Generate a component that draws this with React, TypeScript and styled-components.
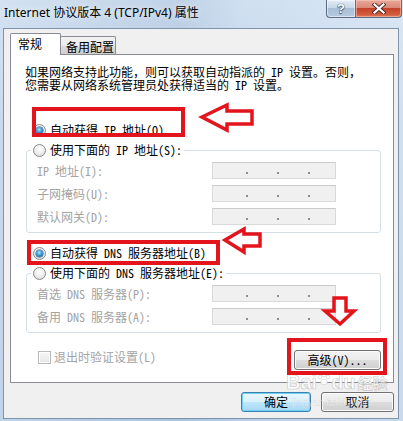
import React from 'react';
import styled, { createGlobalStyle, css } from 'styled-components';

const DLG_FONT = `"Noto Sans Mono CJK SC", "Noto Sans CJK SC", "Liberation Mono", monospace`;
const UI_FONT = `"Noto Sans", "Noto Sans CJK SC", sans-serif`;
const RED = '#e3141c';

const GlobalStyle = createGlobalStyle`
  html, body { margin: 0; padding: 0; width: 403px; height: 421px; overflow: hidden; }
  body { font-family: ${DLG_FONT}; font-size: 12px; background: #fff; }
  * { box-sizing: border-box; }
`;

const Window = styled.div`
  position: relative;
  width: 403px;
  height: 421px;
  display: flex;
  flex-direction: column;
  background:
    linear-gradient(90deg, rgba(255,255,255,0.18) 0%, rgba(120,140,170,0.12) 45%, rgba(255,255,255,0.1) 60%, rgba(255,255,255,0.3) 100%),
    linear-gradient(180deg, #cadcef 0%, #bcd1e9 30%, #b3cae4 100%);
`;

const TitleBar = styled.div`
  height: 28px;
  flex: none;
  display: flex;
  align-items: flex-start;
  padding-left: 4px;
`;

const TitleText = styled.div`
  margin-top: 5px;
  font-family: ${UI_FONT};
  font-size: 12px;
  line-height: 16px;
  color: #000;
  text-shadow: 0 0 6px rgba(255,255,255,0.9);
  flex: 1;
`;

const CaptionGroup = styled.div`
  display: flex;
  margin-right: 1px;
`;

const CaptionButton = styled.div<{ $kind: 'help' | 'close' }>`
  height: 18px;
  display: flex;
  align-items: center;
  justify-content: center;
  border: 1px solid #5c6c82;
  border-top: none;
  ${p => p.$kind === 'help' ? css`
    width: 29px;
    border-right: none;
    border-radius: 0 0 0 4px;
    background: linear-gradient(180deg, #e3ecf6 0%, #c9d8ea 45%, #a9bdd6 50%, #b7cae0 100%);
    box-shadow: inset 0 0 0 1px rgba(255,255,255,0.5);
  ` : css`
    width: 47px;
    border-radius: 0 0 4px 0;
    background: linear-gradient(180deg, #e9a99a 0%, #d98a77 45%, #c4432b 50%, #d35c3e 85%, #e07c5a 100%);
    box-shadow: inset 0 0 0 1px rgba(255,220,210,0.45);
  `}
`;

const HelpGlyph = styled.span`
  font-family: "Liberation Sans", sans-serif;
  font-weight: bold;
  font-size: 13px;
  line-height: 13px;
  color: #fff;
  text-shadow: 0 0 1px #3a4a60, 0 0 1px #3a4a60, 0 1px 1px #3a4a60;
`;

const Frame = styled.div`
  flex: 1;
  display: flex;
  padding: 0 4px 2px 3px;
`;

const Client = styled.div`
  flex: 1;
  display: flex;
  flex-direction: column;
  background: #f0f0f0;
  border: 1px solid #7f93ab;
  padding: 4px 4px 0 6px;
`;

const TabStrip = styled.div`
  height: 21px;
  display: flex;
  align-items: flex-start;
`;

const Tab = styled.div<{ $active?: boolean }>`
  border: 1px solid #898c95;
  border-bottom: none;
  font-family: ${DLG_FONT};
  font-size: 12px;
  color: #000;
  ${p => p.$active ? css`
    position: relative;
    z-index: 1;
    width: 51px;
    height: 22px;
    line-height: 20px;
    padding-left: 7px;
    background: #fff;
    border-radius: 2px 2px 0 0;
  ` : css`
    width: 56px;
    height: 18px;
    margin-top: 3px;
    margin-left: -1px;
    padding-left: 5px;
    line-height: 18px;
    padding-top: 1px;
    background: linear-gradient(180deg, #f2f2f2 0%, #ebebeb 50%, #dddddd 51%, #cfcfcf 100%);
    border-radius: 2px 2px 0 0;
  `}
`;

const Panel = styled.div`
  background: #fff;
  border: 1px solid #898c95;
  display: flex;
  flex-direction: column;
  padding: 10px 12px 12px 0;
`;

const Intro = styled.p`
  margin: 0 0 0 14px;
  line-height: 13px;
  color: #000;
`;

const RadioRow = styled.div<{ $top: number }>`
  margin-top: ${p => p.$top}px;
  margin-left: 22px;
  height: 14px;
  display: flex;
  align-items: center;
  gap: 4px;
  line-height: 14px;
  color: #000;
  white-space: pre;
`;

const Radio = styled.span<{ $checked?: boolean }>`
  flex: none;
  width: 13px;
  height: 13px;
  border-radius: 50%;
  border: 1px solid #8b8b8b;
  background: radial-gradient(circle at 50% 35%, #ffffff 0%, #ececec 55%, #cfcfcf 100%);
  display: inline-flex;
  align-items: center;
  justify-content: center;
  ${p => p.$checked && css`
    &::after {
      content: '';
      width: 7px;
      height: 7px;
      border-radius: 50%;
      background: radial-gradient(circle at 45% 38%, #b7e6fb 0%, #3a9ad3 45%, #0b4f86 100%);
      box-shadow: 0 0 0 0.5px #1a5a8a;
    }
  `}
`;

const Group = styled.fieldset`
  margin: 6px 0 0 15px;
  padding: 5px 0 7px 0;
  border: 1px solid #d5dfe5;
  border-radius: 3px;
  min-width: 0;
  display: flex;
  flex-direction: column;
  gap: 6px;
`;

const GroupLegend = styled.legend`
  margin-left: 4px;
  padding: 0 2px;
  height: 14px;
  display: flex;
  align-items: center;
  gap: 4px;
  line-height: 14px;
  color: #000;
  white-space: pre;
`;

const FieldRow = styled.div`
  height: 17px;
  display: flex;
  align-items: center;
  padding-left: 10px;
`;

const FieldLabel = styled.span`
  width: 175px;
  color: #a3a3a3;
  white-space: pre;
  line-height: 17px;
`;

const IpBox = styled.div`
  width: 124px;
  height: 17px;
  border: 1px solid #d9d9d9;
  border-top-color: #cbcbcb;
  background: #f0f0f0;
  display: flex;
  align-items: flex-end;
  padding: 0 0 4px 33px;
  gap: 29px;
`;

const IpDot = styled.span`
  width: 2px;
  height: 2px;
  background: #8d8d8d;
`;

const BottomRow = styled.div`
  margin-top: 17px;
  margin-left: 27px;
  display: flex;
  align-items: flex-start;
  justify-content: space-between;
`;

const CheckRow = styled.div`
  height: 14px;
  display: flex;
  align-items: center;
  gap: 3px;
  color: #a3a3a3;
  white-space: pre;
  line-height: 14px;
`;

const CheckBox = styled.span`
  width: 13px;
  height: 13px;
  border: 1px solid #b9b9b9;
  background: linear-gradient(180deg, #f6f6f6, #e6e6e6);
  box-shadow: inset 0 0 0 1px #fdfdfd;
`;

const PushButton = styled.button<{ $w: number; $default?: boolean }>`
  width: ${p => p.$w}px;
  height: 20px;
  margin: 0;
  padding: 0;
  font-family: ${DLG_FONT};
  font-size: 12px;
  line-height: 18px;
  color: #000;
  border: 1px solid #707070;
  border-radius: 3px;
  background: linear-gradient(180deg, #f2f2f2 0%, #ebebeb 50%, #dddddd 51%, #cfcfcf 100%);
  box-shadow: inset 0 0 0 1px #fbfbfb;
  white-space: pre;
  ${p => p.$default && css`
    border-color: #3c7fb1;
    background: linear-gradient(180deg, #eaf6fd 0%, #d9f0fc 50%, #bee6fd 51%, #a7d9f5 100%);
    box-shadow: inset 0 0 0 1px #6fd0f6;
  `}
`;

const Footer = styled.div`
  margin-top: 9px;
  display: flex;
  justify-content: flex-end;
  gap: 10px;
  padding-right: 0;
`;

const Annotations = styled.div`
  position: absolute;
  inset: 0;
  pointer-events: none;
`;

const RedBox = styled.div<{ $x: number; $y: number; $w: number; $h: number }>`
  position: absolute;
  left: ${p => p.$x}px;
  top: ${p => p.$y}px;
  width: ${p => p.$w}px;
  height: ${p => p.$h}px;
  border: 4px solid ${RED};
`;

const ArrowLayer = styled.svg`
  position: absolute;
  left: 0;
  top: 0;
`;

const Watermark = styled.div`
  position: absolute;
  left: 286px;
  top: 372px;
  display: flex;
  align-items: flex-end;
  font-family: "Liberation Sans", sans-serif;
  font-weight: bold;
  color: rgba(255, 255, 255, 0.9);
  -webkit-text-stroke: 0.6px rgba(150, 150, 150, 0.55);
`;

const WmLatin = styled.span`
  font-size: 20px;
  line-height: 20px;
`;

const WmCjk = styled.span`
  font-family: "Noto Sans CJK SC", sans-serif;
  font-size: 15px;
  line-height: 18px;
  margin-left: 2px;
`;

const WmUrl = styled.div`
  position: absolute;
  left: 292px;
  top: 397px;
  font-family: "Liberation Sans", sans-serif;
  font-size: 10px;
  color: rgba(255, 255, 255, 0.55);
  -webkit-text-stroke: 0.3px rgba(160, 160, 160, 0.35);
`;

const IpField = () => (
  <IpBox>
    <IpDot />
    <IpDot />
    <IpDot />
  </IpBox>
);

const Row = ({ label }: { label: string }) => (
  <FieldRow>
    <FieldLabel>{label}</FieldLabel>
    <IpField />
  </FieldRow>
);

export default function App() {
  return (
    <>
      <GlobalStyle />
      <Window>
        <TitleBar>
          <TitleText>Internet 协议版本 4 (TCP/IPv4) 属性</TitleText>
          <CaptionGroup>
            <CaptionButton $kind="help">
              <HelpGlyph>?</HelpGlyph>
            </CaptionButton>
            <CaptionButton $kind="close">
              <svg width="14" height="11" viewBox="0 0 14 11">
                <path d="M2.5 1.5 L11.5 9.5 M11.5 1.5 L2.5 9.5" stroke="#4a2a24" strokeWidth="4" strokeLinecap="square" />
                <path d="M2.5 1.5 L11.5 9.5 M11.5 1.5 L2.5 9.5" stroke="#ffffff" strokeWidth="2.2" strokeLinecap="square" />
              </svg>
            </CaptionButton>
          </CaptionGroup>
        </TitleBar>
        <Frame>
          <Client>
            <TabStrip>
              <Tab $active>常规</Tab>
              <Tab>备用配置</Tab>
            </TabStrip>
            <Panel>
              <Intro>
                如果网络支持此功能，则可以获取自动指派的 IP 设置。否则，
                <br />
                您需要从网络系统管理员处获得适当的 IP 设置。
              </Intro>
              <RadioRow $top={32}>
                <Radio $checked />
                <span>自动获得 IP 地址(O)</span>
              </RadioRow>
              <Group>
                <GroupLegend>
                  <Radio />
                  <span>使用下面的 IP 地址(S):</span>
                </GroupLegend>
                <Row label="IP 地址(I):" />
                <Row label="子网掩码(U):" />
                <Row label="默认网关(D):" />
              </Group>
              <RadioRow $top={13}>
                <Radio $checked />
                <span>自动获得 DNS 服务器地址(B)</span>
              </RadioRow>
              <Group>
                <GroupLegend>
                  <Radio />
                  <span>使用下面的 DNS 服务器地址(E):</span>
                </GroupLegend>
                <Row label="首选 DNS 服务器(P):" />
                <Row label="备用 DNS 服务器(A):" />
              </Group>
              <BottomRow>
                <CheckRow>
                  <CheckBox />
                  <span>退出时验证设置(L)</span>
                </CheckRow>
                <PushButton $w={87}>高级(V)...</PushButton>
              </BottomRow>
            </Panel>
            <Footer>
              <PushButton $w={70} $default>确定</PushButton>
              <PushButton $w={73}>取消</PushButton>
            </Footer>
          </Client>
        </Frame>
        <Annotations>
          <Watermark>
            <WmLatin>Bai</WmLatin>
            <svg width="14" height="20" viewBox="0 0 14 20">
              <g fill="rgba(255,255,255,0.9)" stroke="rgba(150,150,150,0.5)" strokeWidth="0.6">
                <circle cx="3" cy="5" r="1.8" />
                <circle cx="7" cy="3" r="1.8" />
                <circle cx="11" cy="5" r="1.8" />
                <ellipse cx="7" cy="10" rx="3.5" ry="2.8" />
              </g>
            </svg>
            <WmLatin>du</WmLatin>
            <WmCjk>经验</WmCjk>
          </Watermark>
          <WmUrl>jingyan.baidu.com</WmUrl>
          <RedBox $x={32} $y={107} $w={153} $h={30} />
          <RedBox $x={27} $y={240} $w={193} $h={25} />
          <RedBox $x={287} $y={338} $w={100} $h={37} />
          <ArrowLayer width="403" height="421" viewBox="0 0 403 421">
            <g fill="none" stroke={RED} strokeWidth="3.5" strokeLinejoin="miter">
              <polygon points="202,117 227,105 227,111 252,111 252,124 227,124 227,130" />
              <polygon points="225,240 244,229 244,234 260,234 260,246 244,246 244,252" />
              <polygon points="334,298 346,298 346,311 354,311 340,324 325,311 334,311" />
            </g>
          </ArrowLayer>
        </Annotations>
      </Window>
    </>
  );
}
